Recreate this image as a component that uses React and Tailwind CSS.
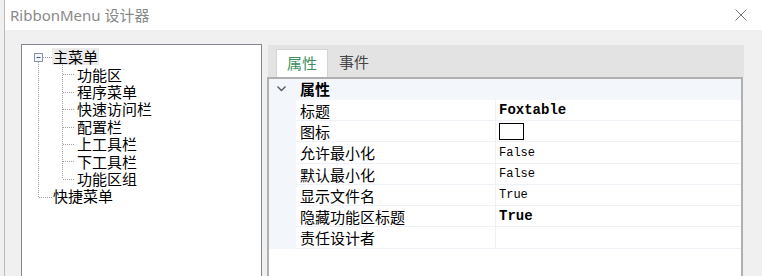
const CJK = "font-['Noto_Sans_CJK_SC','Noto_Sans',sans-serif]";

const children = ["功能区", "程序菜单", "快速访问栏", "配置栏", "上工具栏", "下工具栏", "功能区组"];

const props = [
  { name: "标题", value: "Foxtable", bold: true, h: "h-[21px]" },
  { name: "图标", icon: true, h: "h-[21px]" },
  { name: "允许最小化", value: "False", h: "h-[22px]" },
  { name: "默认最小化", value: "False", h: "h-[21px]" },
  { name: "显示文件名", value: "True", h: "h-[21px]" },
  { name: "隐藏功能区标题", value: "True", bold: true, h: "h-[21px]" },
  { name: "责任设计者", value: "", h: "h-[22px]" },
];

function TreeLines() {
  const centers = [29.4, 46.8, 64.2, 81.6, 99, 116.4, 133.8].map((c) => Math.round(c) + 0.5);
  return (
    <svg className="absolute left-0 top-0 pointer-events-none" width="240" height="200">
      <g stroke="#a0a0a0" strokeWidth="1" strokeDasharray="1 1" fill="none">
        <line x1="16.5" y1="17" x2="16.5" y2="153" />
        <line x1="21" y1="12.5" x2="30" y2="12.5" />
        <line x1="17" y1="152.5" x2="30" y2="152.5" />
        <line x1="40.5" y1="20" x2="40.5" y2="134" />
        {centers.map((c, i) => (
          <line key={i} x1="41" y1={c} x2="53" y2={c} />
        ))}
      </g>
      <rect x="12.5" y="8.5" width="8" height="8" fill="#f4f6fa" stroke="#8a94a8" />
      <line x1="14.5" y1="12.5" x2="18.5" y2="12.5" stroke="#3c5a9a" strokeWidth="1" />
    </svg>
  );
}

export default function App() {
  return (
    <div className="w-[762px] h-[276px] overflow-hidden bg-[#f0f0f0]">
      <div className={`ml-[4px] h-full border-l border-[#b8b8b8] flex flex-col ${CJK}`}>
        {/* Title bar */}
        <div className="h-[30px] bg-white flex items-center justify-between pl-[5px] pr-[15px] shrink-0">
          <span className="text-[15px] text-[#8a8a8a] font-['Noto_Sans','Noto_Sans_CJK_SC',sans-serif] leading-none">
            RibbonMenu 设计器
          </span>
          <svg width="12" height="12" viewBox="0 0 12 12">
            <path d="M0.5 0.5 L11.5 11.5 M11.5 0.5 L0.5 11.5" stroke="#777" strokeWidth="1" />
          </svg>
        </div>

        {/* Body */}
        <div className="flex-1 flex pt-[14px] pl-[16px] gap-[5px]">
          {/* Tree */}
          <div className="relative w-[241px] h-[260px] bg-white border border-[#828790] shrink-0">
            <TreeLines />
            <div className="pt-[3px] text-[15px] text-black">
              <div className="h-[17.4px] flex items-center pl-[30px]">
                <span className="bg-[#ebebeb] px-[1px] h-[17px] flex items-center leading-none">主菜单</span>
              </div>
              {children.map((c) => (
                <div key={c} className="h-[17.4px] flex items-center pl-[55px] leading-none">
                  {c}
                </div>
              ))}
              <div className="h-[17.4px] flex items-center pl-[31px] leading-none">快捷菜单</div>
            </div>
          </div>

          {/* Right panel */}
          <div className="w-[477px] flex flex-col shrink-0">
            <div className="h-[32px] bg-[#e3e3e3] ml-[1px] mt-[1px] flex items-end pl-[8px] shrink-0">
              <div className="w-[52px] h-[28px] bg-white border border-b-0 border-[#d4d4d4] flex items-center justify-center pb-[3px] text-[15px] text-[#3d8f5f] leading-none">
                属性
              </div>
              <div className="w-[52px] h-[28px] flex items-center justify-center pb-[3px] text-[15px] text-[#444] leading-none">
                事件
              </div>
            </div>
            <div className="flex-1 border-2 border-[#b0b0b0] bg-white w-[476px]">
              <div className="h-[21px] bg-[#f3f6fb] flex items-center pb-[2px]">
                <div className="w-[27px] flex justify-center pr-[2px]">
                  <svg width="9" height="6" viewBox="0 0 9 6">
                    <path d="M0.5 0.5 L4.5 4.5 L8.5 0.5" stroke="#555" strokeWidth="1.3" fill="none" />
                  </svg>
                </div>
                <span className="pl-[4px] text-[15px] font-bold leading-none text-black">属性</span>
              </div>
              {props.map((p) => (
                <div key={p.name} className={`${p.h} flex`}>
                  <div className="w-[27px] bg-[#f3f6fb] shrink-0" />
                  <div className="w-[199px] border-b border-[#eef2f8] flex items-center pl-[4px] text-[15px] leading-none text-black shrink-0">
                    {p.name}
                  </div>
                  <div className="flex-1 border-b border-l border-[#eef2f8] flex items-center pl-[3px] text-black font-['Liberation_Mono',monospace] leading-none">
                    {p.icon ? (
                      <div className="w-[25px] h-[17px] border border-black bg-white" />
                    ) : (
                      <span className={p.bold ? "text-[14px] font-bold" : "text-[12px]"}>{p.value}</span>
                    )}
                  </div>
                </div>
              ))}
            </div>
          </div>
        </div>
      </div>
    </div>
  );
}
